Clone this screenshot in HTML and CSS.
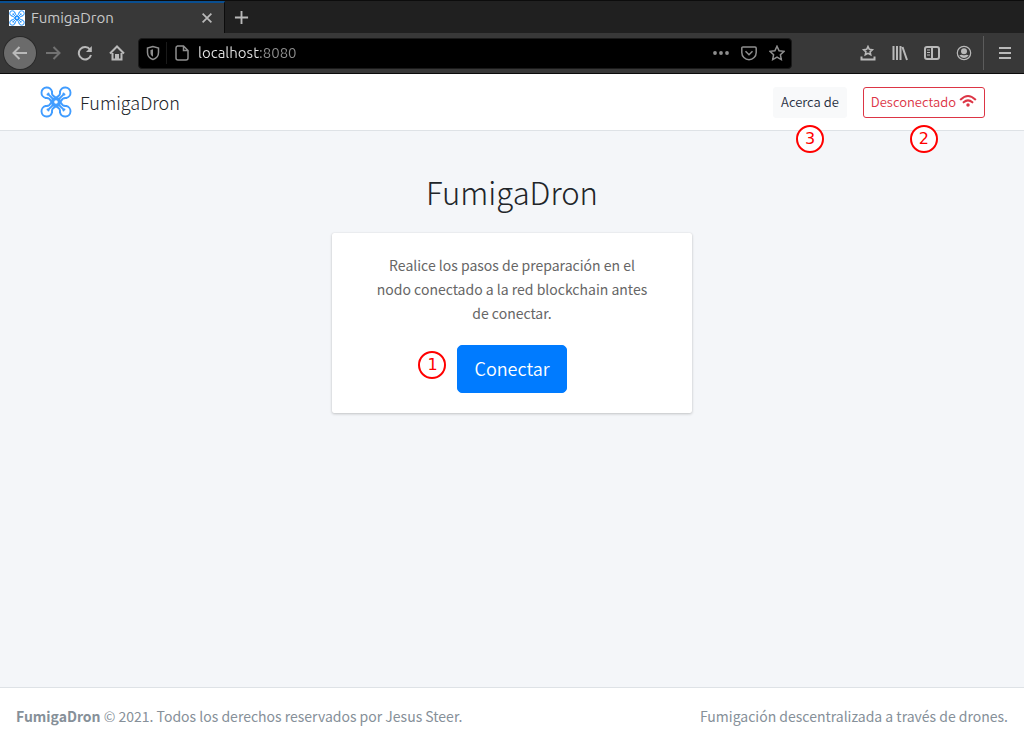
FILE: index.html
```html
<!DOCTYPE html>
<html lang="es">
<head>
<meta charset="utf-8">
<meta name="viewport" content="width=device-width, initial-scale=1">
<title>FumigaDron</title>
<link rel="stylesheet" href="styles.css">
</head>
<body>
<svg class="sprite" aria-hidden="true">
  <symbol id="drone" viewBox="0 0 32 32">
    <g fill="none" stroke="currentColor" stroke-width="1.9" stroke-linecap="round">
      <g id="arm">
        <path d="M5.800 12A5.300 5.300 0 1 1 12 5.800"/>
        <path d="M5.800 12Q9.500 11.500 10.800 15"/>
        <path d="M12 5.800Q11.500 9.500 15 10.800"/>
        <path d="M7.500 8.500Q9 8.500 10.200 10.200L13 13M8.500 7.500Q8.500 9 10.200 10.200"/>
      </g>
      <use href="#arm" transform="rotate(90 16 16)"/>
      <use href="#arm" transform="rotate(180 16 16)"/>
      <use href="#arm" transform="rotate(270 16 16)"/>
      <circle cx="16" cy="16" r="3.500" stroke-width="3.400"/>
    </g>
  </symbol>
</svg>

<div class="browser">
  <div class="tabs">
    <div class="tab">
      <svg class="favicon" viewBox="0 0 32 32"><use href="#drone"/></svg>
      <span class="tab-title">FumigaDron</span>
      <button class="tool tab-close" aria-label="Cerrar pestaña"><svg class="icon" viewBox="0 0 16 16"><path d="M3 3l10 10M13 3L3 13"/></svg></button>
    </div>
    <button class="tool tab-new" aria-label="Nueva pestaña"><svg class="icon" viewBox="0 0 16 16"><path d="M8 1v14M1 8h14"/></svg></button>
  </div>
  <div class="toolbar">
    <button class="tool back" aria-label="Atrás"><svg class="icon" viewBox="0 0 16 16"><path d="M15 8H1.500M7.500 2L1.500 8l6 6"/></svg></button>
    <button class="tool dim" aria-label="Adelante"><svg class="icon" viewBox="0 0 16 16"><path d="M1 8h13.500M8.500 2l6 6-6 6"/></svg></button>
    <button class="tool" aria-label="Recargar"><svg class="icon" viewBox="0 0 16 16"><path d="M13 4.500A6.200 6.200 0 1 0 14 10"/><path d="M14.800 1v6H9z" fill="currentColor" stroke="none"/></svg></button>
    <button class="tool" aria-label="Inicio"><svg class="icon" viewBox="0 0 16 16"><path d="M1 8.500L8 1.500l7 7M3.500 8v6.500h9V8M7 14v-4h2v4"/></svg></button>
    <div class="address">
      <svg class="icon shield" viewBox="0 0 16 16"><path d="M8 1.500L2.500 3v4.500c0 3.500 2.500 6 5.500 7 3-1 5.500-3.500 5.500-7V3z"/><path d="M8 4.300L5.500 5v3c0 1.800 1 2.800 2.500 3.700z" fill="currentColor" stroke="none"/></svg>
      <span class="address-rule"></span>
      <svg class="icon" viewBox="0 0 16 16"><path d="M3.500 1h6L14 5.500V13a2 2 0 0 1-2 2H4a2 2 0 0 1-2-2V3a2 2 0 0 1 1.500-2zM9.500 1v4.500H14"/></svg>
      <input class="url" type="text" value="localhost:8080" aria-label="Dirección">
      <button class="tool small" aria-label="Acciones"><svg class="icon" viewBox="0 0 16 16"><g fill="currentColor" stroke="none"><circle cx="2" cy="8" r="1.900"/><circle cx="8" cy="8" r="1.900"/><circle cx="14" cy="8" r="1.900"/></g></svg></button>
      <button class="tool small" aria-label="Pocket"><svg class="icon" viewBox="0 0 16 16"><path d="M2 2h12q1.200 0 1.200 1.200V7.500a7.200 7.200 0 0 1-14.400 0V3.200Q.8 2 2 2zM4.500 6.300L8 9.700l3.500-3.400"/></svg></button>
      <button class="tool small" aria-label="Marcador"><svg class="icon" viewBox="0 0 16 16"><path d="M8 1.200l2.100 4.500 4.900.6-3.600 3.400.9 4.900L8 12.200l-4.300 2.400.9-4.900L1 6.300l4.900-.6z"/></svg></button>
    </div>
    <div class="tools">
      <button class="tool" aria-label="Marcadores"><svg class="icon" viewBox="0 0 16 16"><path d="M8 1.500l1.300 2.800 3 .4-2.200 2.100.6 3L8 8.400 5.300 9.800l.6-3-2.200-2.100 3-.4z" stroke-width="1.600"/><path d="M1.500 11.500v3h13v-3"/></svg></button>
      <button class="tool" aria-label="Biblioteca"><svg class="icon" viewBox="0 0 16 16"><path d="M1.500 1v14M5 1v14M8.500 1v14M10.500 2l4.500 13"/></svg></button>
      <button class="tool" aria-label="Barra lateral"><svg class="icon" viewBox="0 0 16 16"><rect x="1" y="2" width="14" height="12" rx="2"/><path d="M8 2v12"/><path d="M3 5h3M3 7.500h3M3 10h3" stroke-width="1"/></svg></button>
      <button class="tool" aria-label="Cuenta"><svg class="icon" viewBox="0 0 16 16"><circle cx="8" cy="8" r="6.700" stroke-width="1.200"/><g fill="currentColor" stroke="none"><circle cx="8" cy="6.200" r="3"/><path d="M3.300 10.300q1.500-.8 2.700-.6 2 1 4 0 1.200-.2 2.700.6A5.500 5.500 0 0 1 3.300 10.300z"/></g></svg></button>
      <span class="tools-rule"></span>
      <button class="tool" aria-label="Menú"><svg class="icon" viewBox="0 0 16 16"><path d="M2 3h12M2 8h12M2 13h12"/></svg></button>
    </div>
  </div>
</div>

<header class="navbar">
  <a class="brand" href="#"><svg class="brand-logo" viewBox="0 0 32 32"><use href="#drone"/></svg><span>FumigaDron</span></a>
  <nav class="nav">
    <div class="anchor"><button class="btn btn-light">Acerca de</button><span class="mark mark-below">3</span></div>
    <div class="anchor"><button class="btn btn-danger">Desconectado
      <svg class="wifi" viewBox="0 0 20 16"><g fill="none" stroke="currentColor" stroke-width="2.300" stroke-linecap="round"><path d="M1.700 6.200Q10-1.700 18.300 6.200M5 9.500q5-4.400 10 0"/></g><circle cx="10" cy="12.700" r="2" fill="currentColor"/></svg>
    </button><span class="mark mark-below">2</span></div>
  </nav>
</header>

<main class="content">
  <h1 class="title">FumigaDron</h1>
  <section class="card">
    <p class="message">Realice los pasos de preparación en el nodo conectado a la red blockchain antes de conectar.</p>
    <div class="anchor"><button class="btn btn-primary">Conectar</button><span class="mark mark-left">1</span></div>
  </section>
</main>

<footer class="footer">
  <span><strong>FumigaDron</strong> © 2021. Todos los derechos reservados por Jesus Steer.</span>
  <span>Fumigación descentralizada a través de drones.</span>
</footer>
</body>
</html>
```
FILE: styles.css
```css
* { box-sizing: border-box; }

body {
  margin: 0;
  min-height: 100vh;
  display: flex;
  flex-direction: column;
  background: #f4f6f9;
  color: #212529;
  font: 400 14px/24px "Source Sans Pro", "Noto Sans CJK JP", sans-serif;
}

button, input { font: inherit; margin: 0; }
.sprite { position: absolute; width: 0; height: 0; }

/* Browser window */
.browser {
  background: #383838;
  border-bottom: 1px solid #0c0c0c;
  color: #b9b9b9;
  font-family: Ubuntu, "Noto Sans", sans-serif;
  font-size: 15px;
}
.tabs {
  display: flex;
  height: 33px;
  background: #202020;
  border-top: 1px solid #0c0c0c;
}
.tab {
  display: flex;
  align-items: center;
  width: 225px;
  padding: 0 8px 0 9px;
  background: #383838;
  border-top: 2px solid #0a4f91;
  border-right: 1px solid #0c0c0c;
}
.favicon { width: 16px; height: 16px; background: #fff; color: #1e90ff; }
.tab-title { flex: 1; padding-left: 6px; color: #c8c8c8; }
.toolbar {
  display: flex;
  align-items: center;
  height: 40px;
  padding: 0 3px 0 4px;
}
.tool {
  display: flex;
  align-items: center;
  justify-content: center;
  width: 32px;
  height: 32px;
  padding: 0;
  border: 0;
  background: none;
  color: inherit;
}
.tab-close { width: 18px; }
.tab-close .icon { width: 14px; height: 14px; }
.tab-new .icon { width: 15px; height: 15px; }
.back { margin-right: 1px; border-radius: 50%; background: #6b6b6b; box-shadow: 0 0 0 1px #2a2a2a; }
.dim { color: #727272; }
.icon {
  width: 16px;
  height: 16px;
  flex: none;
  fill: none;
  stroke: currentColor;
  stroke-width: 2;
}
.address {
  display: flex;
  align-items: center;
  flex: 0 1 654px;
  height: 31px;
  margin-left: 5px;
  padding: 0 0 0 6px;
  background: #000;
  border: 1px solid #1a1a1a;
  border-radius: 4px;
  color: #8e8e8e;
}
.address .icon { stroke-width: 1.5; }
.address-rule { width: 1px; height: 22px; margin: 0 7px 0 5px; background: #1a1a1a; }
.url {
  flex: 1;
  min-width: 0;
  padding: 0 0 0 8px;
  border: 0;
  outline: 0;
  background: linear-gradient(90deg, #e6e6e6 70px, #8e8e8e 70px);
  background-clip: text;
  -webkit-background-clip: text;
  color: transparent;
}
.tool.small { width: 28px; }
.tools { display: flex; align-items: center; margin-left: auto; }
.tools-rule { width: 1px; height: 34px; margin: 0 5px 0 3px; background: #5c5c5c; }

/* Page header */
.navbar {
  display: flex;
  align-items: center;
  justify-content: space-between;
  height: 57px;
  padding: 0 39px 0 40px;
  background: #fff;
  border-bottom: 1px solid #dee2e6;
}
.brand {
  display: flex;
  align-items: center;
  gap: 8px;
  color: #212529;
  font-size: 18px;
  font-weight: 300;
  text-decoration: none;
}
.brand-logo { width: 32px; height: 32px; color: #409cff; }
.nav { display: flex; gap: 16px; }
.anchor { position: relative; }
.btn {
  display: flex;
  align-items: center;
  gap: 3px;
  border: 1px solid transparent;
  border-radius: 3px;
  font-weight: 350;
}
.btn-light, .btn-danger { padding: 3px 7px 5px; font-size: 13px; line-height: 21px; }
.btn-light { background: #f8f9fa; border-color: #f8f9fa; color: #1f2d3d; }
.btn-danger { background: #fff; border-color: #dc3545; color: #dc3545; }
.wifi { width: 18px; height: 14px; }

/* Numbered callouts */
.mark {
  position: absolute;
  width: 28px;
  height: 28px;
  border: 2px solid #f00;
  border-radius: 50%;
  background: #fff;
  color: #f00;
  font: 16px/24px "DejaVu Sans", sans-serif;
  text-align: center;
}
.mark-below { top: 38px; left: calc(50% - 14px); }
.mark-left { top: 6px; right: calc(100% + 11px); }

/* Main area */
.content {
  flex: 1;
  display: flex;
  flex-direction: column;
  align-items: center;
  padding-top: 35px;
}
.title {
  margin: 0 0 15px;
  font-size: 31px;
  line-height: 52px;
  font-weight: 300;
}
.card {
  display: flex;
  flex-direction: column;
  align-items: center;
  width: 360px;
  max-width: 100%;
  padding: 20px 40px;
  background: #fff;
  border-radius: 2px;
  box-shadow: 0 0 1px rgba(0, 0, 0, .13), 0 1px 3px rgba(0, 0, 0, .2);
  color: #666;
}
.message { margin: 0 0 20px; text-align: center; }
.btn-primary {
  padding: 7px 16px 9px;
  border-radius: 5px;
  background: #007bff;
  border-color: #007bff;
  color: #fff;
  font-size: 18px;
  line-height: 30px;
}

.footer {
  display: flex;
  justify-content: space-between;
  padding: 16px;
  background: #fff;
  border-top: 1px solid #dee2e6;
  color: #869099;
}
```
